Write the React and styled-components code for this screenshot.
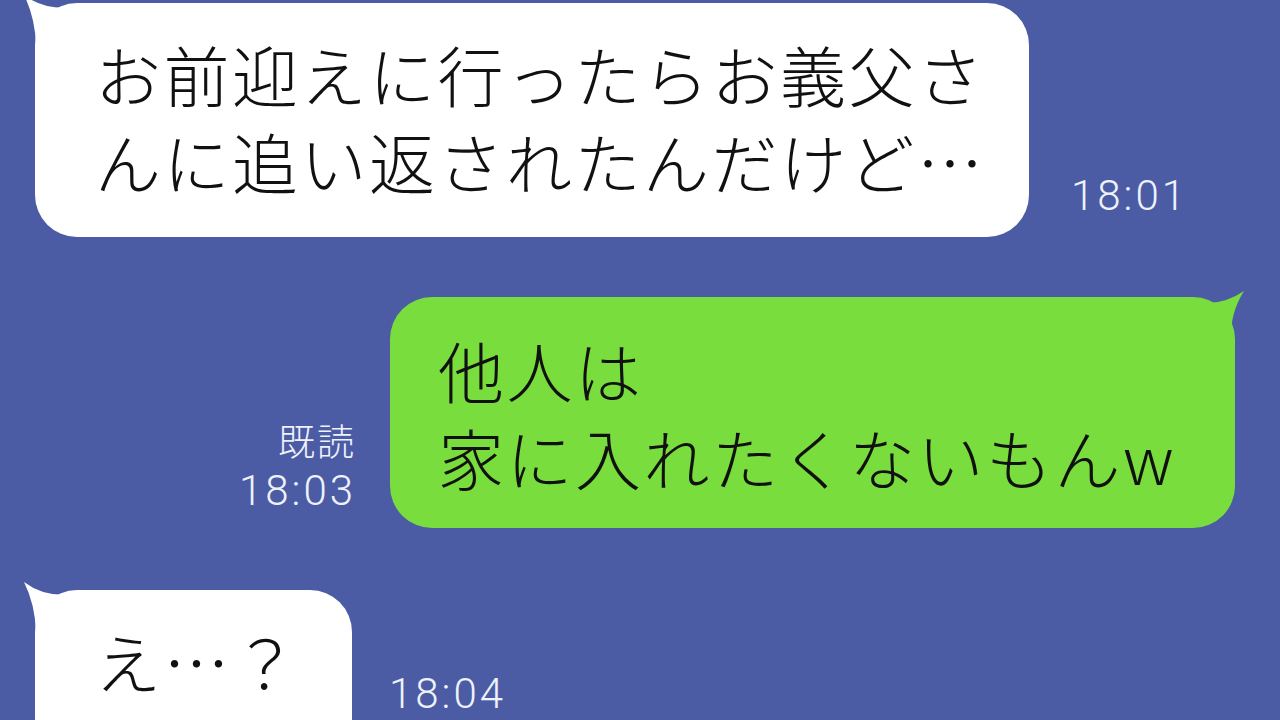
import styled, { createGlobalStyle } from "styled-components";

const GlobalStyle = createGlobalStyle`
  html, body {
    margin: 0;
    padding: 0;
    background: #4b5ca5;
  }
`;

const Screen = styled.div`
  width: 1280px;
  height: 720px;
  overflow: hidden;
  background: #4b5ca5;
  display: flex;
  flex-direction: column;
  padding-top: 3px;
  box-sizing: border-box;
`;

const Row = styled.div`
  display: flex;
  align-items: flex-end;
  justify-content: ${(p) => (p.$mine ? "flex-end" : "flex-start")};
  padding: ${(p) => (p.$mine ? "0 45px 0 0" : "0 0 0 35px")};
  margin-top: ${(p) => p.$top || 0}px;
  flex-shrink: 0;
`;

const Bubble = styled.div`
  position: relative;
  box-sizing: border-box;
  width: ${(p) => p.$w}px;
  height: ${(p) => p.$h}px;
  padding: ${(p) => (p.$mine ? "29px 0 0 48px" : "27px 0 0 60px")};
  background: ${(p) => (p.$mine ? "#79de3d" : "#ffffff")};
  border-radius: 42px;
  font-family: "Noto Sans CJK JP", "Noto Sans", sans-serif;
  font-weight: 300;
  font-size: 66px;
  letter-spacing: 2.5px;
  line-height: 87px;
  color: #111;
  white-space: nowrap;
`;

const Tail = styled.svg`
  position: absolute;
  top: -10px;
  ${(p) => (p.$mine ? "right: -10px;" : "left: -12px;")}
  width: 52px;
  height: 52px;
  overflow: visible;
`;

const Time = styled.div`
  font-family: Roboto, "Liberation Sans", sans-serif;
  font-weight: 300;
  font-size: 42px;
  letter-spacing: 3px;
  line-height: 42px;
  color: #eef2fb;
  margin-left: ${(p) => p.$left || 0}px;
  margin-bottom: ${(p) => p.$bottom || 0}px;
`;

const Meta = styled.div`
  display: flex;
  flex-direction: column;
  align-items: flex-end;
  margin-right: 34px;
  margin-bottom: 16px;
`;

const Read = styled.div`
  font-family: "Noto Sans CJK JP", sans-serif;
  font-weight: 300;
  font-size: 37px;
  letter-spacing: 2px;
  line-height: 44px;
  color: #eef2fb;
  margin-bottom: 8px;
`;

const LeftTail = ({ color }) => (
  <Tail viewBox="0 0 52 52">
    <path
      d="M1 2 Q22 18 52 14 L52 52 L13 52 Q12 24 1 2 Z"
      fill={color}
    />
  </Tail>
);

const RightTail = ({ color }) => (
  <Tail $mine viewBox="0 0 52 52">
    <path
      d="M51 4 Q28 20 0 15 L0 52 L38 52 Q37 26 51 4 Z"
      fill={color}
    />
  </Tail>
);

export default function App() {
  return (
    <>
      <GlobalStyle />
      <Screen>
        <Row>
          <Bubble $w={994} $h={234}>
            <LeftTail color="#ffffff" />
            お前迎えに行ったらお義父さ
            <br />
            んに追い返されたんだけど…
          </Bubble>
          <Time $left={42} $bottom={20}>
            18:01
          </Time>
        </Row>

        <Row $mine $top={60}>
          <Meta>
            <Read>既読</Read>
            <Time>18:03</Time>
          </Meta>
          <Bubble $mine $w={845} $h={231}>
            <RightTail color="#79de3d" />
            他人は
            <br />
            家に入れたくないもんw
          </Bubble>
        </Row>

        <Row $top={62}>
          <Bubble $w={317} $h={170}>
            <LeftTail color="#ffffff" />
            え…？
          </Bubble>
          <Time $left={37} $bottom={45}>
            18:04
          </Time>
        </Row>
      </Screen>
    </>
  );
}
